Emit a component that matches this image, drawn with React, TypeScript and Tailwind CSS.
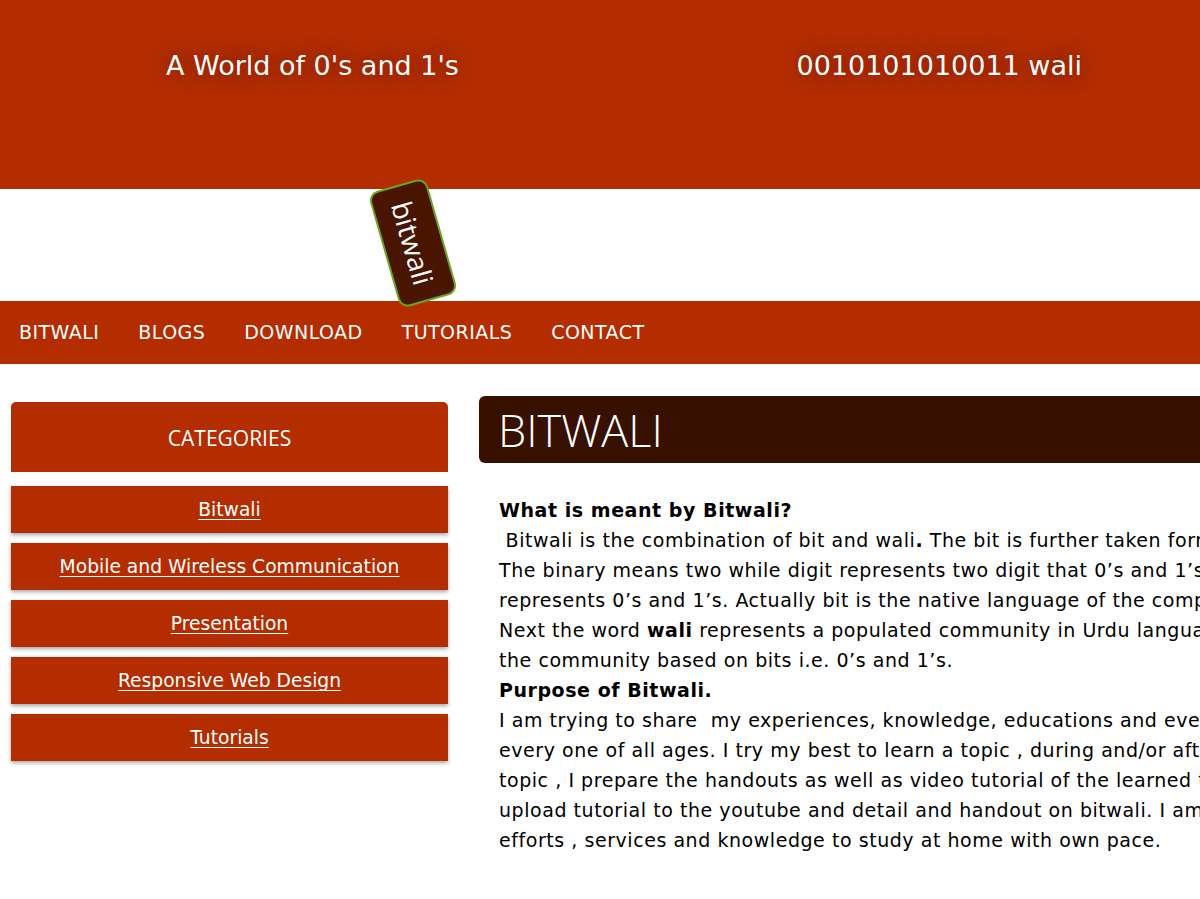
import React from "react";

const verd = '"DejaVu Sans", Verdana, sans-serif';
const seg = '"Open Sans", "Noto Sans", sans-serif';

const cats = [
  "Bitwali",
  "Mobile and Wireless Communication",
  "Presentation",
  "Responsive Web Design",
  "Tutorials",
];

const nav = ["BITWALI", "BLOGS", "DOWNLOAD", "TUTORIALS", "CONTACT"];

export default function App() {
  return (
    <div className="w-[1200px] h-[899px] overflow-hidden bg-white relative">
      <header className="h-[189px] bg-[#b32d00] flex items-start pt-[47px] text-white">
        <div
          className="ml-[166px] text-[27px] leading-[38px] [text-shadow:0_0_18px_rgba(60,10,0,0.6)]"
          style={{ fontFamily: verd }}
        >
          A World of 0's and 1's
        </div>
        <div
          className="ml-auto mr-[118px] text-[27px] leading-[38px] [text-shadow:0_0_18px_rgba(60,10,0,0.6)]"
          style={{ fontFamily: verd }}
        >
          0010101010011 wali
        </div>
      </header>
      <div className="h-[112px] relative">
        <div
          className="absolute left-[353px] top-[24px] w-[120px] h-[60px] rounded-[10px] border-2 border-[#6aa51e] bg-[#4a1500] text-white flex items-center justify-center rotate-[74deg] text-[28px] z-10"
          style={{ fontFamily: seg }}
        >
          bitwali
        </div>
      </div>
      <nav
        className="h-[63px] bg-[#b32d00] flex items-center text-white text-[19px] tracking-[0.45px]"
        style={{ fontFamily: verd }}
      >
        {nav.map((n) => (
          <div key={n} className="px-[19.5px] first:pl-[19px]">
            {n}
          </div>
        ))}
      </nav>
      <main className="flex">
        <aside className="ml-[11px] w-[437px] pt-[38px] flex flex-col">
          <div
            className="h-[70px] bg-[#b32d00] rounded-t-[5px] text-white text-[21px] flex items-center justify-center pt-[3px]"
            style={{ fontFamily: seg }}
          >
            CATEGORIES
          </div>
          <div className="mt-[14px] flex flex-col gap-[10px]">
            {cats.map((c) => (
              <div
                key={c}
                className="h-[47px] bg-[#b32d00] shadow-[0_2px_4px_rgba(0,0,0,0.35)] flex items-center justify-center text-white text-[18.7px] pt-[2px]"
                style={{ fontFamily: verd }}
              >
                <a href="#" className="underline underline-offset-[3px] text-white">
                  {c}
                </a>
              </div>
            ))}
          </div>
        </aside>
        <section className="ml-[31px] flex-1 pt-[32px] min-w-0">
          <div
            className="h-[67px] bg-[#381000] rounded-l-[6px] text-white text-[45px] font-light flex items-center pl-[19px] w-[800px]"
            style={{ fontFamily: seg }}
          >
            BITWALI
          </div>
          <div
            className="pl-[20px] pt-[32px] text-[19px] leading-[30px] tracking-[0.55px] text-black whitespace-nowrap"
            style={{ fontFamily: verd }}
          >
            <div className="font-bold">What is meant by Bitwali?</div>
            <div>&nbsp;Bitwali is the combination of bit and wali<b>.</b> The bit is further taken form binary digit.</div>
            <div>The binary means two while digit represents two digit that 0’s and 1’s. So bit</div>
            <div>represents 0’s and 1’s. Actually bit is the native language of the computer.</div>
            <div>Next the word <b>wali</b> represents a populated community in Urdu language. So bitwali is</div>
            <div>the community based on bits i.e. 0’s and 1’s.</div>
            <div className="font-bold">Purpose of Bitwali.</div>
            <div>I am trying to share&nbsp; my experiences, knowledge, educations and every thing with</div>
            <div>every one of all ages. I try my best to learn a topic , during and/or after learning the</div>
            <div>topic , I prepare the handouts as well as video tutorial of the learned topic. Then I</div>
            <div>upload tutorial to the youtube and detail and handout on bitwali. I am sharing my</div>
            <div>efforts , services and knowledge to study at home with own pace.</div>
          </div>
        </section>
      </main>
    </div>
  );
}
